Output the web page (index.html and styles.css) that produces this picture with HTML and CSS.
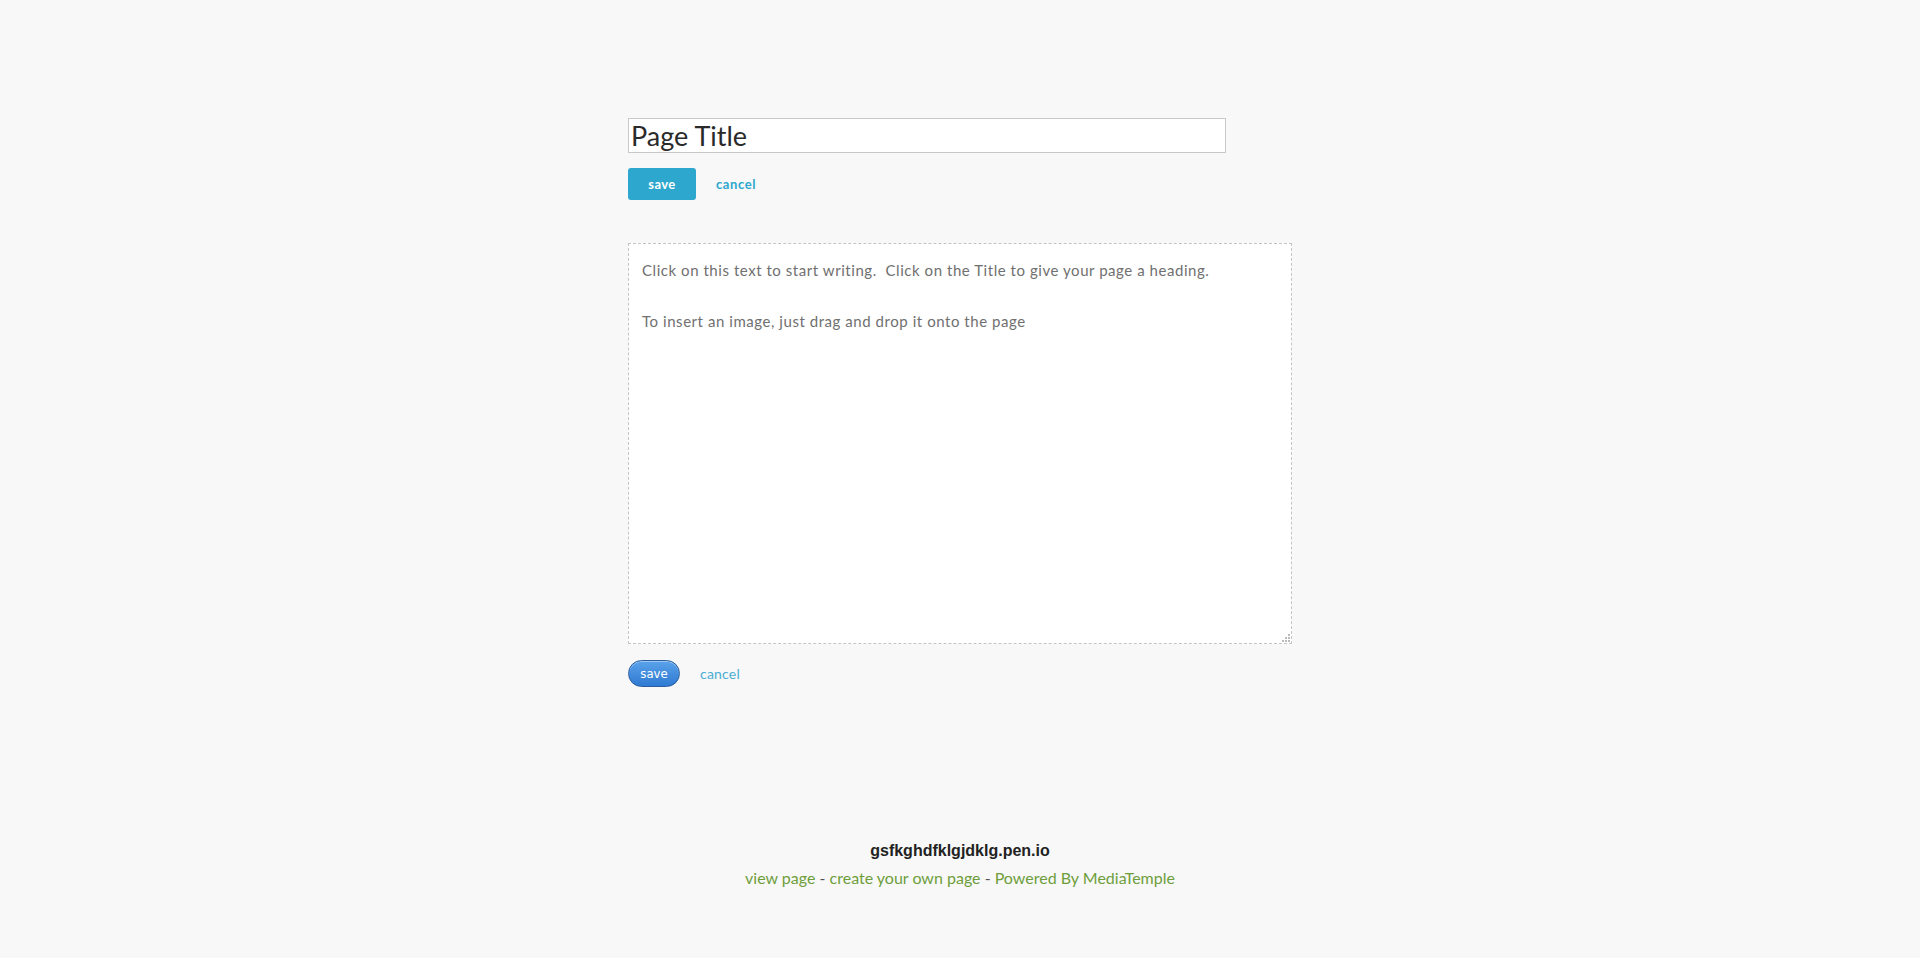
FILE: index.html
```html
<!DOCTYPE html>
<html lang="en">
<head>
    <meta charset="UTF-8">
    <meta name="viewport" content="width=device-width, initial-scale=1.0">
    <title>gsfkghdfklgjdklg.pen.io</title>
    <link rel="stylesheet" href="styles.css">
</head>
<body>
    <div id="editor-container">
        <input id="page-title" type="text" value="Page Title">
        <div class="title-actions">
            <button class="btn-flat">save</button>
            <a class="link-bold" href="#">cancel</a>
        </div>

        <div id="page-body" contenteditable="true">
            <p>Click on this text to start writing.&nbsp; Click on the Title to give your page a heading.</p>
            <p class="second">To insert an image, just drag and drop it onto the page</p>
            <svg class="grip" width="9" height="9" viewBox="0 0 9 9">
                <rect x="6" y="0" width="2" height="2" fill="#bbb"/>
                <rect x="3" y="3" width="2" height="2" fill="#bbb"/>
                <rect x="6" y="3" width="2" height="2" fill="#bbb"/>
                <rect x="0" y="6" width="2" height="2" fill="#bbb"/>
                <rect x="3" y="6" width="2" height="2" fill="#bbb"/>
                <rect x="6" y="6" width="2" height="2" fill="#bbb"/>
            </svg>
        </div>
        <div class="body-actions">
            <button class="btn-pill">save</button>
            <a class="link-light" href="#">cancel</a>
        </div>
    </div>

    <div id="footer">
        <div class="site-name">gsfkghdfklgjdklg.pen.io</div>
        <div class="footer-links">
            <a href="#">view page</a> - <a href="#">create your own page</a> - <a href="#">Powered By MediaTemple</a>
        </div>
    </div>
</body>
</html>
```
FILE: styles.css
```css
body {
    margin: 0;
    background-color: #f8f8f8;
    font-family: Lato, "Open Sans", Arial, sans-serif;
    color: #333;
}
#editor-container {
    width: 664px;
    margin: 0 auto;
    padding-top: 118px;
}
#page-title {
    display: block;
    box-sizing: border-box;
    width: 598px;
    height: 35px;
    margin: 0;
    padding: 0 2px;
    border: 1px solid #c8c8c8;
    background: #fff;
    font-family: Lato, Arial, sans-serif;
    font-size: 27px;
    color: #2a2a2a;
    outline: none;
}
.title-actions {
    display: flex;
    align-items: center;
    gap: 20px;
    margin-top: 15px;
}
.btn-flat {
    width: 68px;
    height: 32px;
    border: none;
    border-radius: 3px;
    background-color: #2da7cd;
    color: white;
    font-family: Lato, Arial, sans-serif;
    font-weight: bold;
    font-size: 13px;
    letter-spacing: 0.4px;
    cursor: pointer;
}
.link-bold {
    color: #2da7cd;
    font-weight: bold;
    font-size: 13px;
    letter-spacing: 0.6px;
    text-decoration: none;
}
#page-body {
    position: relative;
    box-sizing: border-box;
    height: 401px;
    margin-top: 43px;
    padding: 9px 13px;
    background: #fff;
    border: 1px dashed #c4c4c4;
    color: #707070;
    font-size: 15px;
    letter-spacing: 0.55px;
    outline: none;
}
#page-body p {
    margin: 8px 0;
}
#page-body p.second {
    margin-top: 33px;
}
.grip {
    position: absolute;
    right: 0;
    bottom: 0;
}
.body-actions {
    display: flex;
    align-items: center;
    gap: 20px;
    margin-top: 16px;
}
.btn-pill {
    width: 52px;
    height: 27px;
    border: 1px solid #2a5d9c;
    border-radius: 14px;
    background: linear-gradient(#5aa2ea, #2f7ad3);
    box-shadow: inset 0 1px 0 rgba(255, 255, 255, 0.4);
    color: white;
    font-family: "DejaVu Sans Condensed", "DejaVu Sans", sans-serif;
    font-size: 13px;
    padding: 0;
    cursor: pointer;
}
.link-light {
    color: #4aaed3;
    font-size: 14px;
    letter-spacing: 0.2px;
    text-decoration: none;
}
#footer {
    margin-top: 155px;
    text-align: center;
}
.site-name {
    font-family: "Liberation Sans", Arial, sans-serif;
    font-weight: bold;
    font-size: 16px;
    color: #222;
}
.footer-links {
    margin-top: 8px;
    font-size: 16px;
    color: #555;
}
.footer-links a {
    color: #6e9e3c;
    text-decoration: none;
}
```
